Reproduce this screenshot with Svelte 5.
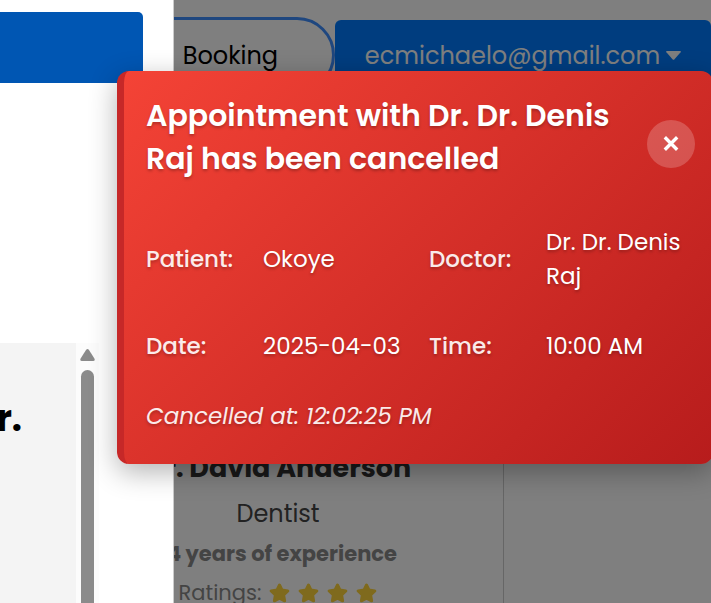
<script>
  let open = $state(true);

  const details = [
    { label: 'Patient:', value: 'Okoye' },
    { label: 'Doctor:', value: 'Dr. Dr. Denis Raj' },
    { label: 'Date:', value: '2025-04-03' },
    { label: 'Time:', value: '10:00 AM' }
  ];
  const stars = [1, 2, 3, 4];
</script>

<div class="page">
  <aside class="drawer">
    <div class="drawer-head"></div>
    <div class="drawer-body">
      <div class="panel"><h2>Dr.</h2></div>
      <div class="scrollbar">
        <svg width="15" height="12" viewBox="0 0 15 12" aria-hidden="true">
          <path d="M6 1 Q7.5 -.8 9 1 L14.400 9.4 Q15.400 12 13.200 12 H1.8 Q-.4 12 .6 9.4Z" fill="#8b8b8b" />
        </svg>
        <div class="thumb"></div>
      </div>
    </div>
  </aside>

  <main class="content">
    <nav class="topbar">
      <a class="booking" href="#booking">Booking</a>
      <button class="account" type="button">
        <span>ecmichaelo@gmail.com</span>
        <svg width="15" height="9" viewBox="0 0 15 9" aria-hidden="true">
          <path d="M.8 0 H14.200 Q15.500 0 14.600 1.200 L8.500 8.200 Q7.500 9.200 6.500 8.200 L.4 1.200 Q-.5 0 .8 0Z" fill="#fff" />
        </svg>
      </button>
    </nav>
    <article class="card">
      <h3>Dr. David Anderson</h3>
      <p class="role">Dentist</p>
      <p class="experience">14 years of experience</p>
      <p class="ratings">
        <span>Ratings:</span>
        {#each stars as star (star)}
          <svg width="21" height="20" viewBox="0 0 21 20" aria-hidden="true">
            <path
              d="M10.500 2 L12.900 7 L18.800 7.900 L14.600 12 L15.600 17.800 L10.500 15.200 L5.400 17.800 L6.400 12 L2.200 7.900 L8.100 7Z"
              fill="#ffd43b"
              stroke="#ffd43b"
              stroke-width="3"
              stroke-linejoin="round"
            />
          </svg>
        {/each}
      </p>
    </article>
    <div class="backdrop"></div>
  </main>

  {#if open}
    <section class="toast" role="alert">
      <header>
        <h1>Appointment with Dr. Dr. Denis Raj has been cancelled</h1>
        <button class="close" type="button" aria-label="Close" onclick={() => (open = false)}>
          <svg width="16" height="16" viewBox="0 0 16 16" aria-hidden="true">
            <path d="M1.800 1.300 L14.200 13.700 M14.200 1.300 L1.800 13.700" stroke="#fff" stroke-width="3.400" />
          </svg>
        </button>
      </header>
      <dl>
        {#each details as item (item.label)}
          <dt>{item.label}</dt>
          <dd>{item.value}</dd>
        {/each}
      </dl>
      <p class="stamp">Cancelled at: 12:02:25 PM</p>
    </section>
  {/if}
</div>

<style>
  .page {
    position: relative;
    display: flex;
    height: 100vh;
    overflow: hidden;
    background: #fff;
    font-family: Poppins, Inter, "Noto Sans", sans-serif;
  }
  h1, h2, h3, p, dl, dd {
    margin: 0;
  }
  button {
    border: 0;
    font: inherit;
    cursor: pointer;
  }

  .drawer {
    box-sizing: border-box;
    flex: none;
    display: flex;
    flex-direction: column;
    width: 174px;
    padding-top: 12px;
    border-right: 1px solid #ccc;
  }
  .drawer-head {
    height: 71px;
    margin-right: 30px;
    border-top-right-radius: 5px;
    background: #0056b3;
  }
  .drawer-body {
    flex: 1;
    display: flex;
    margin-top: 260px;
  }
  .panel {
    display: flex;
    justify-content: flex-end;
    box-sizing: border-box;
    width: 76px;
    padding: 51px 54px 0 0;
    background: #f4f4f4;
  }
  .panel h2 {
    font-size: 36px;
    line-height: 50px;
    font-weight: 700;
  }
  .scrollbar {
    display: flex;
    flex-direction: column;
    align-items: center;
    gap: 9px;
    width: 23px;
    padding-top: 6px;
    background: #fcfcfc;
  }
  .thumb {
    flex: 1;
    width: 13px;
    border-radius: 7px 7px 0 0;
    background: #8b8b8b;
  }

  .content {
    position: relative;
    flex: 1;
    min-width: 0;
    overflow: hidden;
  }
  .backdrop {
    position: absolute;
    inset: 0;
    background: rgba(0, 0, 0, 0.5);
  }
  .topbar {
    display: flex;
    align-items: center;
    height: 76px;
    padding-top: 17px;
    font-size: 24px;
  }
  .booking {
    box-sizing: border-box;
    display: flex;
    align-items: center;
    justify-content: flex-end;
    flex: none;
    width: 209px;
    height: 76px;
    margin-left: -48px;
    padding-right: 54px;
    border: 3px solid #3f8eff;
    border-radius: 38px;
    color: #000;
    text-decoration: none;
  }
  .account {
    flex: 1;
    display: flex;
    align-items: center;
    justify-content: center;
    gap: 6px;
    height: 70px;
    padding: 0;
    border-radius: 6px;
    background: #007bff;
    color: #fff;
  }

  .card {
    box-sizing: border-box;
    width: 451px;
    height: 560px;
    margin: 0 0 0 -121px;
    padding-top: 355px;
    border-right: 1px solid #ccc;
    text-align: center;
  }
  .card h3 {
    color: #333;
    font-size: 27px;
    line-height: 40px;
    font-weight: 700;
  }
  .role {
    margin-top: 6px;
    color: #444;
    font-size: 24px;
    line-height: 40px;
  }
  .experience {
    color: #888;
    font-size: 21px;
    line-height: 40px;
    font-weight: 700;
  }
  .ratings {
    display: flex;
    align-items: center;
    justify-content: center;
    gap: 8px;
    color: #888;
    font-size: 21px;
    line-height: 38px;
  }

  .toast {
    box-sizing: border-box;
    position: absolute;
    top: 71px;
    left: 117px;
    right: -2px;
    padding: 23px 18px 31px 22px;
    border-left: 7px solid #c62828;
    border-radius: 12px;
    background: linear-gradient(135deg, #f44336, #b71c1c);
    box-shadow: 0 8px 28px rgba(0, 0, 0, 0.3);
    color: #fff;
    text-shadow: 0 2px 3px rgba(0, 0, 0, 0.25);
    font-size: 23px;
    line-height: 34px;
  }
  .toast header {
    display: flex;
    align-items: center;
    justify-content: space-between;
    gap: 16px;
  }
  .toast h1 {
    font-size: 30px;
    line-height: 43px;
    font-weight: 600;
  }
  .close {
    flex: none;
    display: flex;
    align-items: center;
    justify-content: center;
    width: 48px;
    height: 48px;
    margin-top: 14px;
    padding: 0;
    border-radius: 50%;
    background: rgba(255, 255, 255, 0.2);
  }
  dl {
    display: grid;
    grid-template-columns: 87px 136px 87px 1fr;
    align-items: center;
    gap: 36px 30px;
    margin-top: 45px;
  }
  dt, dd {
    white-space: nowrap;
  }
  dd:nth-of-type(2) {
    white-space: normal;
  }
  dt {
    font-weight: 500;
    opacity: 0.9;
  }
  .stamp {
    margin-top: 36px;
    font-style: italic;
    opacity: 0.9;
  }
</style>
